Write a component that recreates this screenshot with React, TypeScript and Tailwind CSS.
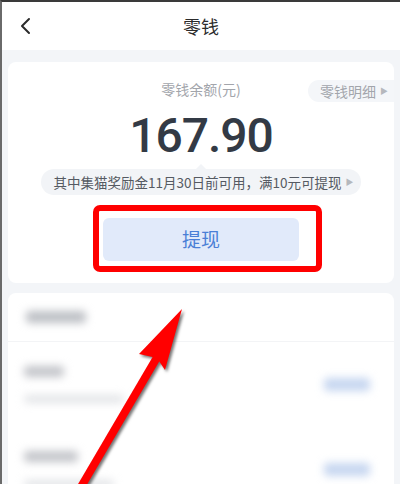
const cjk = { fontFamily: '"Noto Sans CJK SC", "Noto Sans", sans-serif' };

const BackIcon = () => (
  <svg width="14" height="18" viewBox="0 0 14 18" fill="none">
    <path d="M11 2 L4 9 L11 16" stroke="#2b2b2b" strokeWidth="2" strokeLinecap="round" strokeLinejoin="round" />
  </svg>
);

const Arrow = () => (
  <svg
    className="pointer-events-none absolute left-0 top-0 drop-shadow-[2px_2px_1.5px_rgba(0,0,0,0.55)]"
    width="400"
    height="484"
    viewBox="0 0 400 484"
  >
    <path d="M76 490 L157 352" stroke="#ff0000" strokeWidth="8" strokeLinecap="butt" />
    <polygon points="180,307 163,368 155,356 137,352" fill="#ff0000" />
  </svg>
);

const BlurRow = ({ label, sub }: { label: string; sub: string }) => (
  <div className="flex h-[85px] items-center justify-between pl-4 pr-6">
    <div className="flex flex-col gap-[18px]">
      <div className={`h-[11px] ${label} rounded bg-[#c2c4c9] blur-[4px]`} />
      <div className={`h-[8px] ${sub} rounded bg-[#e2e4e7] blur-[4px]`} />
    </div>
    <div className="h-[13px] w-[46px] rounded bg-[#c6d6f0] blur-[4px]" />
  </div>
);

const App = () => {
  return (
    <div
      className="relative h-[484px] w-[400px] overflow-hidden border-l-2 border-t-2 border-l-[#6a6a6a] border-t-[#3a3a3a] bg-[#f3f5f8]"
      style={cjk}
    >
      <div className="relative flex h-[48px] items-center justify-center bg-white">
        <div className="absolute left-[16px] top-[15px]">
          <BackIcon />
        </div>
        <span className="text-[18px] text-[#2b2b2b]">零钱</span>
      </div>

      <div className="flex flex-col gap-[10px] px-[6px] pt-[12px]">
        <div className="relative flex h-[221px] flex-col items-center rounded-lg bg-white pt-[17px]">
          <div className="text-[14px] leading-5 text-[#a2a5ab]">零钱余额(元)</div>
          <div className="absolute right-0 top-[18px] flex h-[22px] items-center gap-[4px] rounded-l-full bg-[#f4f6f9] pl-[12px] pr-[6px] text-[14px] text-[#a2a5ab]">
            零钱明细
            <span className="text-[8px] text-[#b5b8bd]">▶</span>
          </div>
          <div
            className="mt-[13px] text-[48px] font-medium leading-[48px] tracking-[-1px] text-[#333a45]"
            style={{ fontFamily: 'Roboto, "Liberation Sans", sans-serif' }}
          >
            167.90
          </div>
          <div className="relative mt-[9px] flex h-[26px] items-center gap-[4px] rounded-full bg-[#f2f4f7] pl-[13px] pr-[8px] text-[13.5px] text-[#555a62]">
            <div className="absolute left-1/2 top-[-5px] h-0 w-0 -translate-x-1/2 border-x-[5px] border-b-[5px] border-x-transparent border-b-[#f2f4f7]" />
            其中集猫奖励金11月30日前可用，满10元可提现
            <span className="text-[8px] text-[#b5b8bd]">▶</span>
          </div>
          <div className="mt-[23px] flex h-[43px] w-[196px] items-center justify-center rounded-md bg-[#e1eafa] text-[19px] text-[#4a7fd6]">
            提现
          </div>
        </div>

        <div className="flex h-[220px] flex-col rounded-lg bg-white">
          <div className="flex h-[49px] items-center border-b border-[#f3f4f6] pl-[18px]">
            <div className="h-[12px] w-[60px] rounded bg-[#bcbfc4] blur-[4px]" />
          </div>
          <BlurRow label="w-[40px]" sub="w-[100px]" />
          <BlurRow label="w-[54px]" sub="w-[90px]" />
        </div>
      </div>

      <div className="pointer-events-none absolute left-[91px] top-[203px] h-[67px] w-[229px] rounded-[7px] border-[6px] border-[#ff0000]" />
      <Arrow />
    </div>
  );
};

export default App;
